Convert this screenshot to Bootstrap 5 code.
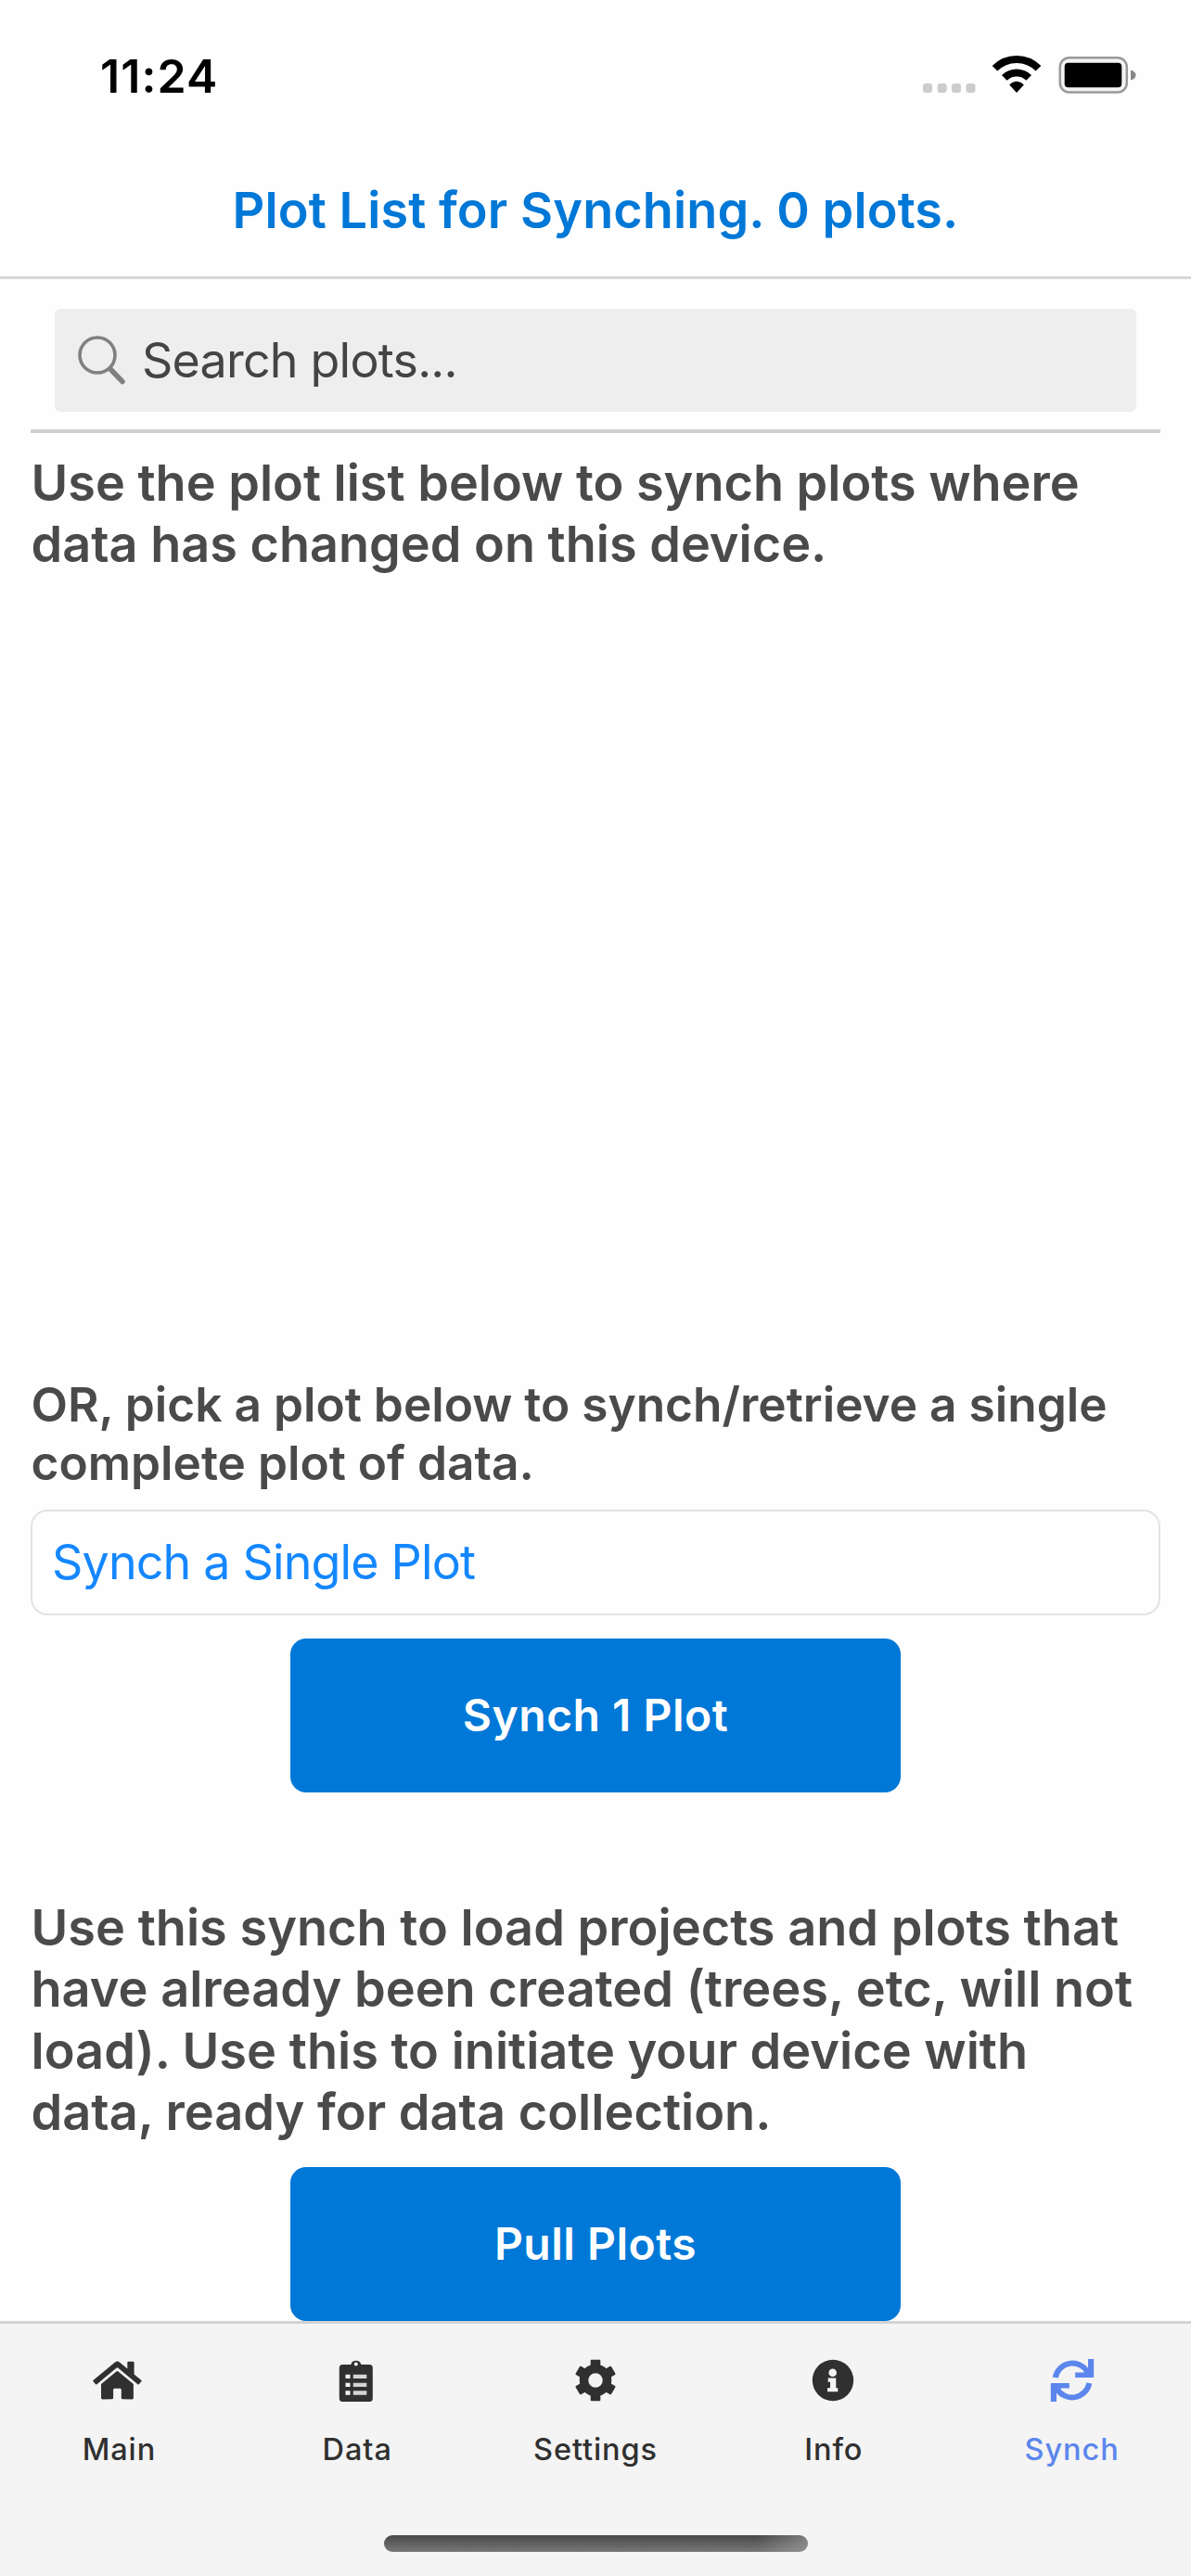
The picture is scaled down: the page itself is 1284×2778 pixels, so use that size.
<!DOCTYPE html>
<html lang="en">
<head>
<meta charset="utf-8">
<meta name="viewport" content="width=device-width, initial-scale=1">
<title>Plot List for Synching</title>
<link href="https://cdn.jsdelivr.net/npm/bootstrap@5.3.0/dist/css/bootstrap.min.css" rel="stylesheet">
<style>
body{font-family:Inter,"Liberation Sans",sans-serif;background:#fefefe;color:#4a4a4a}
.phone{width:1284px;height:2778px;overflow:hidden}
.topbar{height:301px;border-bottom:3px solid #d8d8d8}
.status{height:164px;padding:52px 54px 0 108px}
.clock{font-size:50px;line-height:60px;font-weight:600;letter-spacing:1.1px;color:#000}
.screen-title{font-size:54px;line-height:66px;font-weight:600;letter-spacing:.1px;color:#0078d7;padding-top:30px}
.search-row{margin:0 33px;padding:32px 26px 19px;border-bottom:4px solid #d0d0d0;height:166px}
.search-box{height:111px;background:#eee;border-radius:6px;padding-left:24px;gap:16px}
.search-label{font-size:52px;line-height:64px;letter-spacing:-.8px;color:#444}
.copy{font-weight:600;margin:0 0 0 33.5px;white-space:nowrap}
.copy-list{font-size:54px;line-height:66px;padding-top:21px;height:1008px}
.copy-single{font-size:51.4px;line-height:63px;padding-top:8px;height:153px}
.copy-pull{font-size:54.1px;line-height:66.3px;height:291px}
.picker{margin:0 33px;height:114px;border:2px solid #e3e3e3;border-radius:18px;padding-left:21px;font-size:52px;letter-spacing:-.85px;color:#1487ff}
.single-action{padding-top:25px;height:304px}
.action{width:658px;height:166px;border:0;border-radius:17px;background:#0078d7;color:#fff;font-weight:600;font-size:48px;letter-spacing:.5px}
.tabs{height:275px;border-top:3px solid #d3d3d3;background:#f4f4f4;padding-top:31px}
.tab{flex:1 1 0;color:#303030;font-size:32.5px;line-height:40px;font-weight:500;letter-spacing:.9px}
.tab svg{display:block;width:60px;height:60px;margin:0 auto 25px;fill:currentColor}
.tab.on{color:#5c86ec}
.home-bar{width:457px;height:18px;border-radius:9px;margin-top:72px;background:linear-gradient(90deg,transparent 88%,#aaa8),linear-gradient(#484848,#777)}
</style>
</head>
<body>
<div class="phone d-flex flex-column">
  <header class="topbar flex-shrink-0">
    <div class="status d-flex justify-content-between">
      <div class="clock">11:24</div>
      <svg width="240" height="60" viewBox="990 52 240 60">
        <g fill="#ccc"><rect x="995" y="90" width="10" height="10" rx="3"/><rect x="1010.7" y="90" width="10" height="10" rx="3"/><rect x="1026" y="90" width="10" height="10" rx="3"/><rect x="1041.5" y="90" width="10" height="10" rx="3"/></g>
        <g transform="translate(1096 100)">
          <path d="M-23.5 -26.2A33 33 0 0 1 23.5 -26.2M-13.2 -16.2A18.8 18.8 0 0 1 13.2 -16.2" fill="none" stroke="#000" stroke-width="8"/>
          <path d="M-7.8 -8.5Q0 -16 7.8 -8.5L0 0Z"/>
        </g>
        <rect x="1142.8" y="62.2" width="72" height="37.4" rx="10" fill="#f4f4f4" stroke="#999" stroke-width="2.5"/>
        <rect x="1147.7" y="67.7" width="61.6" height="26.6" rx="4"/>
        <path d="M1219 75.5Q1224.500 77 1224.500 81Q1224.500 85 1219 86.500Z" fill="#888"/>
      </svg>
    </div>
    <h1 class="screen-title text-center m-0">Plot List for Synching. 0 plots.</h1>
  </header>

  <main class="flex-shrink-0">
    <div class="search-row">
      <div class="search-box d-flex align-items-center">
        <svg width="54" height="54" viewBox="0 0 54 54" fill="none" stroke="#808080"><circle cx="22" cy="21" r="19" stroke-width="3.600"/><path d="M36 36L49 49.500" stroke-width="5.500" stroke-linecap="round"/></svg>
        <span class="search-label">Search plots...</span>
      </div>
    </div>
    <p class="copy copy-list">Use the plot list below to synch plots where<br>data has changed on this device.</p>
    <p class="copy copy-single">OR, pick a plot below to synch/retrieve a single<br>complete plot of data.</p>
    <div class="picker d-flex align-items-center">Synch a Single Plot</div>
    <div class="single-action d-flex justify-content-center"><button type="button" class="action">Synch 1 Plot</button></div>
    <p class="copy copy-pull">Use this synch to load projects and plots that<br>have already been created (trees, etc, will not<br>load). Use this to initiate your device with<br>data, ready for data collection.</p>
    <div class="d-flex justify-content-center"><button type="button" class="action">Pull Plots</button></div>
  </main>

  <nav class="tabs flex-shrink-0">
    <div class="d-flex text-center">
      <div class="tab">
        <svg viewBox="-30 -30 60 60"><path transform="translate(-27.700 -23.200) scale(.0908)" d="M280.37 148.26L96 300.11V464a16 16 0 0 0 16 16l112.06-.29a16 16 0 0 0 15.92-16V368a16 16 0 0 1 16-16h64a16 16 0 0 1 16 16v95.64a16 16 0 0 0 16 16.05L464 480a16 16 0 0 0 16-16V300L295.67 148.26a12.19 12.19 0 0 0-15.3 0zM571.6 251.47L488 182.56V44.05a12 12 0 0 0-12-12h-56a12 12 0 0 0-12 12v72.61L318.47 43a48 48 0 0 0-61 0L4.34 251.47a12 12 0 0 0-1.6 16.9l25.5 31A12 12 0 0 0 45.15 301l235.22-193.74a12.19 12.19 0 0 1 15.3 0L530.9 301a12 12 0 0 0 16.9-1.6l25.5-31a12 12 0 0 0-1.7-16.93z"/></svg>
        Main
      </div>
      <div class="tab">
        <svg viewBox="-30 -30 60 60"><g transform="translate(-1.200 0)"><path fill-rule="evenodd" d="M-14.500 -17H-5.500A5.700 5.700 0 0 1 5.500 -17H14.500Q18 -17 18 -13.500V19.500Q18 23 14.500 23H-14.500Q-18 23 -18 19.500V-13.500Q-18 -17 -14.500 -17ZM2 -17.500A2 2 0 1 0 -2 -17.500A2 2 0 1 0 2 -17.500Z"/><path fill="#f4f4f4" d="M-11.300 -6.300h5v4.300h-5zM-11.300 2.700h5v4.300h-5zM-11.300 11.200h5v4.600h-5z"/><path fill="#d4d4d4" d="M-3 -6.300h14.500v4.300H-3zM-3 2.700h14.500v4.300H-3zM-3 11.200h14.500v4.600H-3z"/></g></svg>
        Data
      </div>
      <div class="tab">
        <svg viewBox="-30 -30 60 60"><circle r="12.500" fill="none" stroke="currentColor" stroke-width="9.500"/><g id="teeth"><rect x="-5.300" y="-22.200" width="10.600" height="9" rx="1"/><rect x="-5.300" y="13.200" width="10.600" height="9" rx="1"/></g><use href="#teeth" transform="rotate(60)"/><use href="#teeth" transform="rotate(120)"/></svg>
        Settings
      </div>
      <div class="tab">
        <svg viewBox="-30 -30 60 60"><g transform="translate(-1 0)"><circle r="22.200"/><g fill="#f4f4f4"><circle cx="-.300" cy="-8.300" r="4.300"/><path d="M-5.300 -2.500H3.300V8.200H5.300V12.300H-6V8.200H-3V1.700H-5.300Z"/></g></g></svg>
        Info
      </div>
      <div class="tab on">
        <svg viewBox="-30 -30 60 60"><g id="arrow"><path d="M-18.300 -3A18.800 18.800 0 0 1 16.500 -9" fill="none" stroke="currentColor" stroke-width="6"/><path d="M17 -23H23.200V-3H3.200V-8.500H12L17 -12Z"/></g><use href="#arrow" transform="rotate(180)"/></svg>
        Synch
      </div>
    </div>
    <div class="home-bar mx-auto"></div>
  </nav>
</div>
<script src="https://cdn.jsdelivr.net/npm/bootstrap@5.3.0/dist/js/bootstrap.bundle.min.js"></script>
</body>
</html>
